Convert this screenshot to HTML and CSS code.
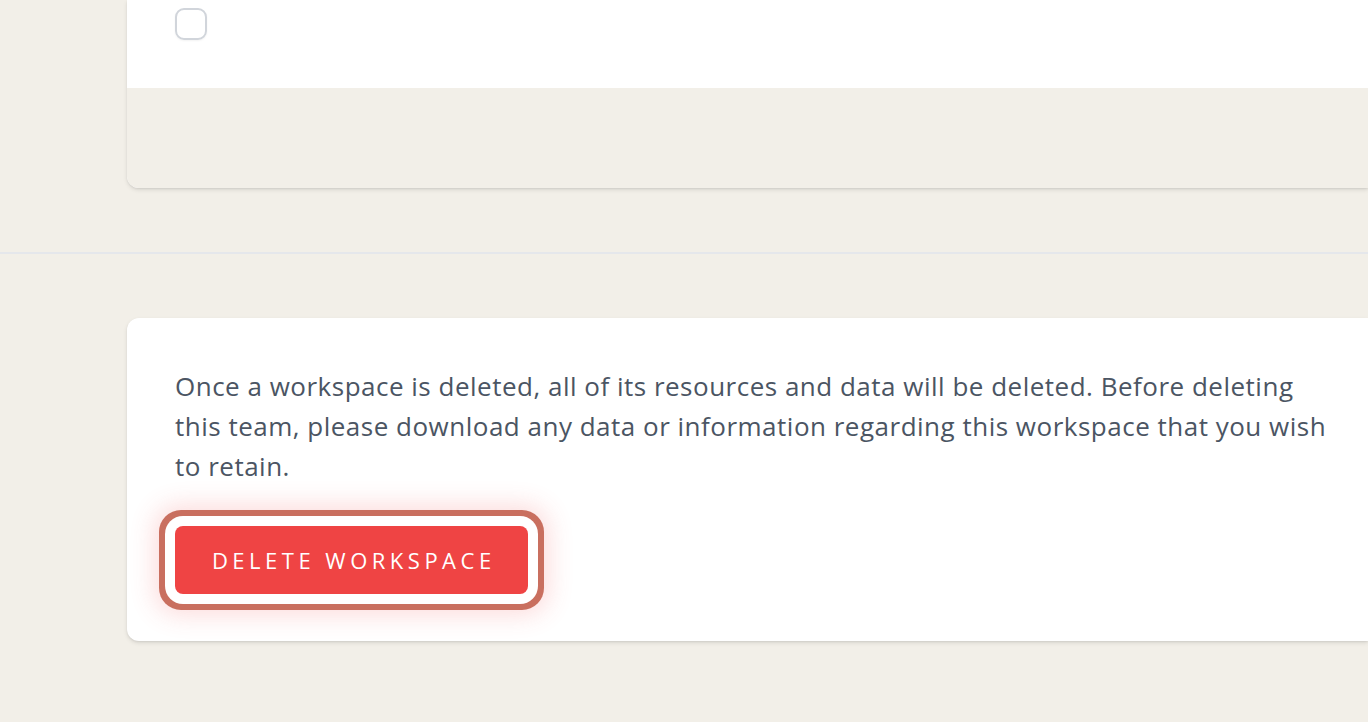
FILE: index.html
```html
<!DOCTYPE html>
<html>
<head>
<meta charset="utf-8">
<link rel="stylesheet" href="styles.css">
</head>
<body>
<div class="page">
  <section class="card card-top">
    <div class="card-body">
      <span class="checkbox"></span>
    </div>
    <div class="card-footer"></div>
  </section>
  <hr class="divider">
  <section class="card card-danger">
    <p class="danger-text">Once a workspace is deleted, all of its resources and data will be deleted. Before deleting this team, please download any data or information regarding this workspace that you wish to retain.</p>
    <button class="btn-danger">Delete Workspace</button>
  </section>
</div>
</body>
</html>
```
FILE: styles.css
```css
html, body {
  margin: 0;
  padding: 0;
  background: #f2efe8;
  overflow: hidden;
  height: 100%;
}
body {
  font-family: "Open Sans", "Noto Sans", sans-serif;
}
.page {
  display: flex;
  flex-direction: column;
  padding-left: 127px;
}
.card {
  background: #fff;
  box-shadow: 0 2px 4px rgba(0,0,0,0.10), 0 1px 2px rgba(0,0,0,0.06);
}
.card-top {
  border-radius: 0 0 0 12px;
  overflow: hidden;
}
.card-body {
  height: 80px;
  padding: 8px 48px 0;
}
.checkbox {
  display: block;
  width: 28px;
  height: 28px;
  border: 2px solid #d1d5db;
  border-radius: 9px;
  box-shadow: 0 1px 2px rgba(0,0,0,0.05);
}
.card-footer {
  height: 100px;
  background: #f2efe8;
}
.divider {
  margin: 64px 0 0 -127px;
  border: 0;
  height: 2px;
  background: #e5e7eb;
}
.card-danger {
  margin-top: 64px;
  border-radius: 12px 0 0 12px;
  padding: 48px 30px 48px 48px;
  box-sizing: border-box;
  height: 323px;
}
.danger-text {
  margin: 0;
  max-width: 1160px;
  font-size: 26px;
  letter-spacing: 0.5px;
  line-height: 40px;
  color: #4b5563;
}
.btn-danger {
  margin-top: 40px;
  width: 353px;
  height: 68px;
  padding: 0;
  border: 0;
  border-radius: 8px;
  background: #ef4444;
  color: #fff;
  font-family: inherit;
  font-size: 22px;
  font-weight: 500;
  letter-spacing: 4.5px;
  text-indent: 4.5px;
  text-transform: uppercase;
  box-shadow: 0 0 0 10px #fff, 0 0 0 16px #c96f5f, 0 0 26px 20px rgba(239, 68, 68, 0.2);
}
```
